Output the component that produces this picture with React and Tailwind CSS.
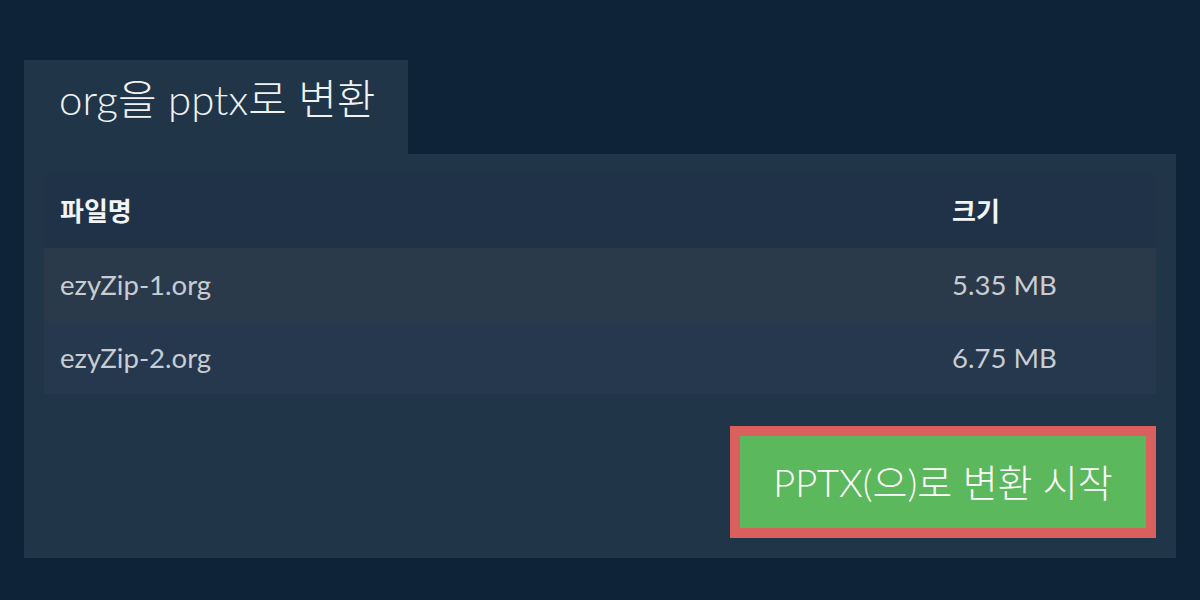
import React from "react";

const files = [
  { name: "ezyZip-1.org", size: "5.35 MB" },
  { name: "ezyZip-2.org", size: "6.75 MB" },
];

export default function App() {
  return (
    <div
      className="w-[1200px] h-[600px] bg-[#0f2338] pt-[60px] px-[24px]"
      style={{ fontFamily: 'Lato, "Noto Sans CJK KR", sans-serif' }}
    >
      {/* tab */}
      <div className="w-[384px] h-[94px] bg-[#213549] pl-[35px] pt-[15px]">
        <h1 className="text-[42px] font-light text-[#f0f2f4] leading-[48px] whitespace-nowrap">
          org을 pptx로 변환
        </h1>
      </div>

      {/* panel */}
      <div className="bg-[#213549] h-[404px] px-[20px] pt-[21px] pb-[20px] flex flex-col">
        <table className="w-full border-collapse">
          <thead>
            <tr className="bg-[#1f3248] h-[73px]">
              <th className="text-left pl-[16px] text-[26px] font-bold text-[#f2f4f6]">파일명</th>
              <th className="text-left w-[204px] text-[26px] font-bold text-[#f2f4f6]">크기</th>
            </tr>
          </thead>
          <tbody>
            {files.map((f, i) => (
              <tr
                key={f.name}
                className={`h-[73px] ${i === 0 ? "bg-[#2b3a4b]" : "bg-[#25384e]"}`}
              >
                <td className="pl-[16px] text-[27.5px] text-[#c8cdd3]">{f.name}</td>
                <td className="text-[27.5px] text-[#c8cdd3]">{f.size}</td>
              </tr>
            ))}
          </tbody>
        </table>

        <div className="flex justify-end mt-[32px]">
          <button className="w-[426px] h-[112px] border-[10px] border-[#d9605c] bg-[#5cb85c] text-white text-[38px] font-light whitespace-nowrap">
            PPTX(으)로 변환 시작
          </button>
        </div>
      </div>
    </div>
  );
}
